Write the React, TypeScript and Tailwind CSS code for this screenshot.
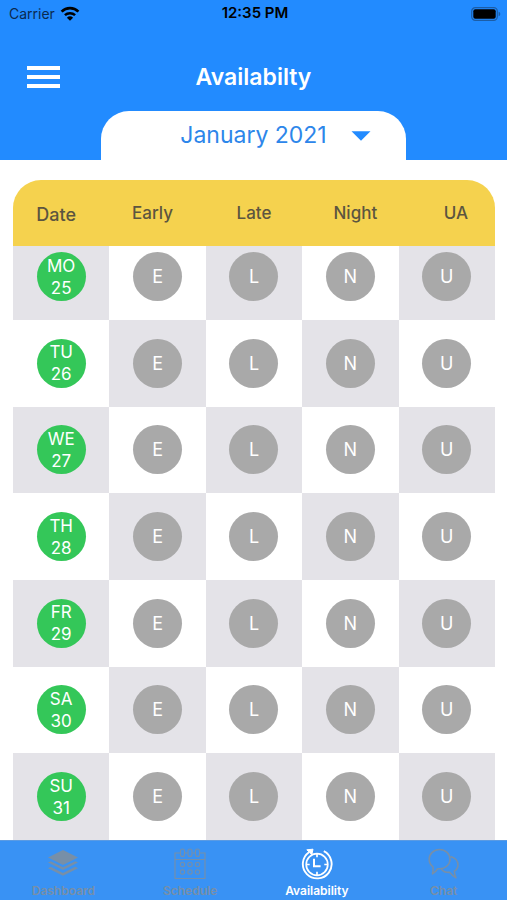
import { useState } from "react";
import type { ReactNode } from "react";

const MONTHS = ["December 2020", "January 2021", "February 2021"];

const DAYS = [
  { day: "MO", date: 25 },
  { day: "TU", date: 26 },
  { day: "WE", date: 27 },
  { day: "TH", date: 28 },
  { day: "FR", date: 29 },
  { day: "SA", date: 30 },
  { day: "SU", date: 31 },
];

const SHIFTS = [
  { code: "E", name: "Early" },
  { code: "L", name: "Late" },
  { code: "N", name: "Night" },
  { code: "U", name: "UA" },
];

function WifiIcon() {
  return (
    <svg className="w-5 h-4" viewBox="0 0 20 16" fill="none" stroke="black" aria-hidden="true">
      <path d="M1.6 5.6a12 12 0 0 1 16.8 0" strokeWidth="2.7" />
      <path d="M4.9 9.2a7.4 7.4 0 0 1 10.2 0" strokeWidth="2.5" />
      <path d="M10 14.8 6.9 11.7a4.5 4.5 0 0 1 6.2 0Z" fill="black" stroke="none" />
    </svg>
  );
}

function BatteryIcon() {
  return (
    <svg className="w-[30px] h-[14px]" viewBox="0 0 30 14" aria-hidden="true">
      <rect x="0.7" y="0.7" width="25.6" height="12.6" rx="3.6" fill="none" stroke="#1c5da6" strokeWidth="1.2" />
      <rect x="2.3" y="2.3" width="22.4" height="9.4" rx="2" fill="black" />
      <path d="M27.6 4.7a2.4 2.4 0 0 1 0 4.6Z" fill="#1c5da6" />
    </svg>
  );
}

function StatusBar() {
  return (
    <div className="grid grid-cols-3 items-center h-[27px] pl-[9px] pr-[6px] text-[14px] text-black">
      <div className="flex items-center gap-[5px] text-[#0b2a50]">
        Carrier <WifiIcon />
      </div>
      <div className="text-center text-[15px] font-semibold">12:35 PM</div>
      <div className="flex justify-end">
        <BatteryIcon />
      </div>
    </div>
  );
}

function Header() {
  const [month, setMonth] = useState("January 2021");

  return (
    <header className="bg-[#228bff]">
      <StatusBar />
      <div className="grid grid-cols-[1fr_auto_1fr] items-center h-[84px] px-[27px] pt-4">
        <button aria-label="Menu" className="flex flex-col gap-[5px] w-[33px]">
          <span className="h-1 w-full bg-white" />
          <span className="h-1 w-full bg-white" />
          <span className="h-1 w-full bg-white" />
        </button>
        <h1 className="text-[23px] leading-7 font-semibold text-white">Availabilty</h1>
      </div>
      <div className="relative w-3/5 mx-auto rounded-t-[28px] bg-white">
        <select
          aria-label="Month"
          value={month}
          onChange={(e) => setMonth(e.target.value)}
          className="block w-full h-[49px] appearance-none bg-transparent text-center [text-align-last:center] text-[23px] text-[#2d86ea] outline-none"
        >
          {MONTHS.map((m) => (
            <option key={m}>{m}</option>
          ))}
        </select>
        <svg
          className="absolute right-[35px] top-5 w-5 h-[10px] pointer-events-none"
          viewBox="0 0 20 10"
          aria-hidden="true"
        >
          <path d="M0.5 0.3h19L10 9.8Z" fill="#228bff" />
        </svg>
      </div>
    </header>
  );
}

function ShiftButton({ code, label }: { code: string; label: string }) {
  const [active, setActive] = useState(false);

  return (
    <button
      aria-label={label}
      aria-pressed={active}
      onClick={() => setActive(!active)}
      className={`inline-flex items-center justify-center size-[49px] rounded-full align-top text-[18px] text-white ${
        active ? "bg-[#34c759]" : "bg-[#a9a9a9]"
      }`}
    >
      {code}
    </button>
  );
}

function AvailabilityTable() {
  return (
    <table className="w-full h-full table-fixed border-collapse text-center">
      <thead>
        <tr className="h-[66px] text-[17px] text-[#5c5540] [&>*]:pt-[2px]">
          <th className="rounded-tl-[28px] bg-[#f5d24e] pr-[10px] text-[18px] font-medium">Date</th>
          <th className="bg-[#f5d24e] pr-[10px] font-medium">Early</th>
          <th className="bg-[#f5d24e] font-medium">Late</th>
          <th className="bg-[#f5d24e] pl-[10px] font-medium">Night</th>
          <th className="rounded-tr-[28px] bg-[#f5d24e] pl-[18px] font-medium">UA</th>
        </tr>
      </thead>
      <tbody>
        {DAYS.map(({ day, date }, row) => (
          <tr
            key={date}
            className={`${row === 0 ? "h-[74px] align-top [&>*]:pt-[6px]" : "align-middle"} ${
              row % 2 === 0
                ? "[&>*:nth-child(odd)]:bg-[#e4e3e8]"
                : "[&>*:nth-child(even)]:bg-[#e4e3e8]"
            }`}
          >
            <th scope="row" className="font-normal">
              <span className="inline-flex flex-col items-center justify-center size-[49px] rounded-full align-top bg-[#34c759] text-[17px] leading-[22px] text-white">
                <span>{day}</span>
                <span>{date}</span>
              </span>
            </th>
            {SHIFTS.map((shift) => (
              <td key={shift.code}>
                <ShiftButton code={shift.code} label={`${shift.name} ${day} ${date}`} />
              </td>
            ))}
          </tr>
        ))}
      </tbody>
    </table>
  );
}

function DashboardIcon() {
  return (
    <svg className="size-8" viewBox="0 0 32 32" fill="currentColor" aria-hidden="true">
      <path d="M16 2 31 9.5 16 17 1 9.5Z" />
      <path d="M1 14.6 3.8 13.2 16 19.3 28.2 13.2 31 14.600 16 22.100Z" />
      <path d="M1 20.200 3.800 18.800 16 24.900 28.200 18.800 31 20.200 16 27.700Z" />
    </svg>
  );
}

function ScheduleIcon() {
  return (
    <svg className="size-8" viewBox="0 0 32 32" fill="none" stroke="currentColor" strokeWidth="1.1" aria-hidden="true">
      <path d="M6 5H1v25.500h30V5h-5M1 11.500h30M11 5h2.500M18.500 5H21" />
      {[8.5, 16, 23.5].map((x) => (
        <g key={x}>
          <rect x={x - 2} y="1" width="4" height="7.500" rx="2" />
          <circle cx={x} cy="16.500" r="2.200" />
          <circle cx={x} cy="24" r="2.200" />
        </g>
      ))}
    </svg>
  );
}

function AvailabilityIcon() {
  return (
    <svg className="size-8" viewBox="0 0 32 32" fill="none" stroke="currentColor" aria-hidden="true">
      <path d="M22.8 3.2A14.4 14.4 0 1 1 8 4.2" strokeWidth="1.9" />
      <path d="M5.8 1.8 12 1.2 10.8 6.6Z" fill="currentColor" strokeWidth="1" />
      <circle cx="16" cy="16.5" r="10.8" strokeWidth="1.7" />
      <path d="M16 6v3.2M16 23.8V27M5.5 16.5h3.2M23.3 16.5h3.2" strokeWidth="1.7" />
      <path d="M13 10.8v7.4h6.6" strokeWidth="2" />
    </svg>
  );
}

function ChatIcon() {
  return (
    <svg className="size-8" viewBox="0 0 32 32" fill="none" stroke="currentColor" strokeWidth="1.6" strokeLinejoin="round" aria-hidden="true">
      <path d="M11.500 1.500C17.500 1.500 22 5.800 22 11.200s-4.500 9.600-10.500 9.600c-.6 0-1.200 0-1.800-.1C8.300 22.800 6.500 24.500 4.500 25.800c.7-2.300.9-4.500.5-7C2.600 17 1.200 14.300 1.200 11.200 1.200 5.800 5.700 1.500 11.500 1.500Z" />
      <path d="M22.500 8.600c4.300.9 7.500 4.100 7.500 8.100 0 2.700-1.400 5-3.700 6.500.1 2.300.7 4.500 1.700 6.600-2.500-1.300-4.600-3.200-6.200-5.400-3.500.2-6.700-1.100-8.500-3.500" />
    </svg>
  );
}

function TabItem({ label, active, children }: { label: string; active?: boolean; children: ReactNode }) {
  return (
    <a
      href="#"
      aria-current={active ? "page" : undefined}
      className={`flex flex-1 flex-col items-center gap-[3px] text-[12px] leading-4 font-semibold ${
        active ? "text-white" : "text-[#778fa8]"
      }`}
    >
      {children}
      {label}
    </a>
  );
}

export default function App() {
  return (
    <div className="flex flex-col h-screen bg-white font-['Inter','Liberation_Sans',sans-serif]">
      <Header />
      <main className="flex-1 min-h-0 overflow-y-auto pt-5 pl-[13px] pr-3">
        <AvailabilityTable />
      </main>
      <nav className="flex h-[60px] border-t border-[#5b9be3] bg-[#3992f4] pt-[7px]">
        <TabItem label="Dashboard">
          <DashboardIcon />
        </TabItem>
        <TabItem label="Schedule">
          <ScheduleIcon />
        </TabItem>
        <TabItem label="Availability" active>
          <AvailabilityIcon />
        </TabItem>
        <TabItem label="Chat">
          <ChatIcon />
        </TabItem>
      </nav>
    </div>
  );
}
